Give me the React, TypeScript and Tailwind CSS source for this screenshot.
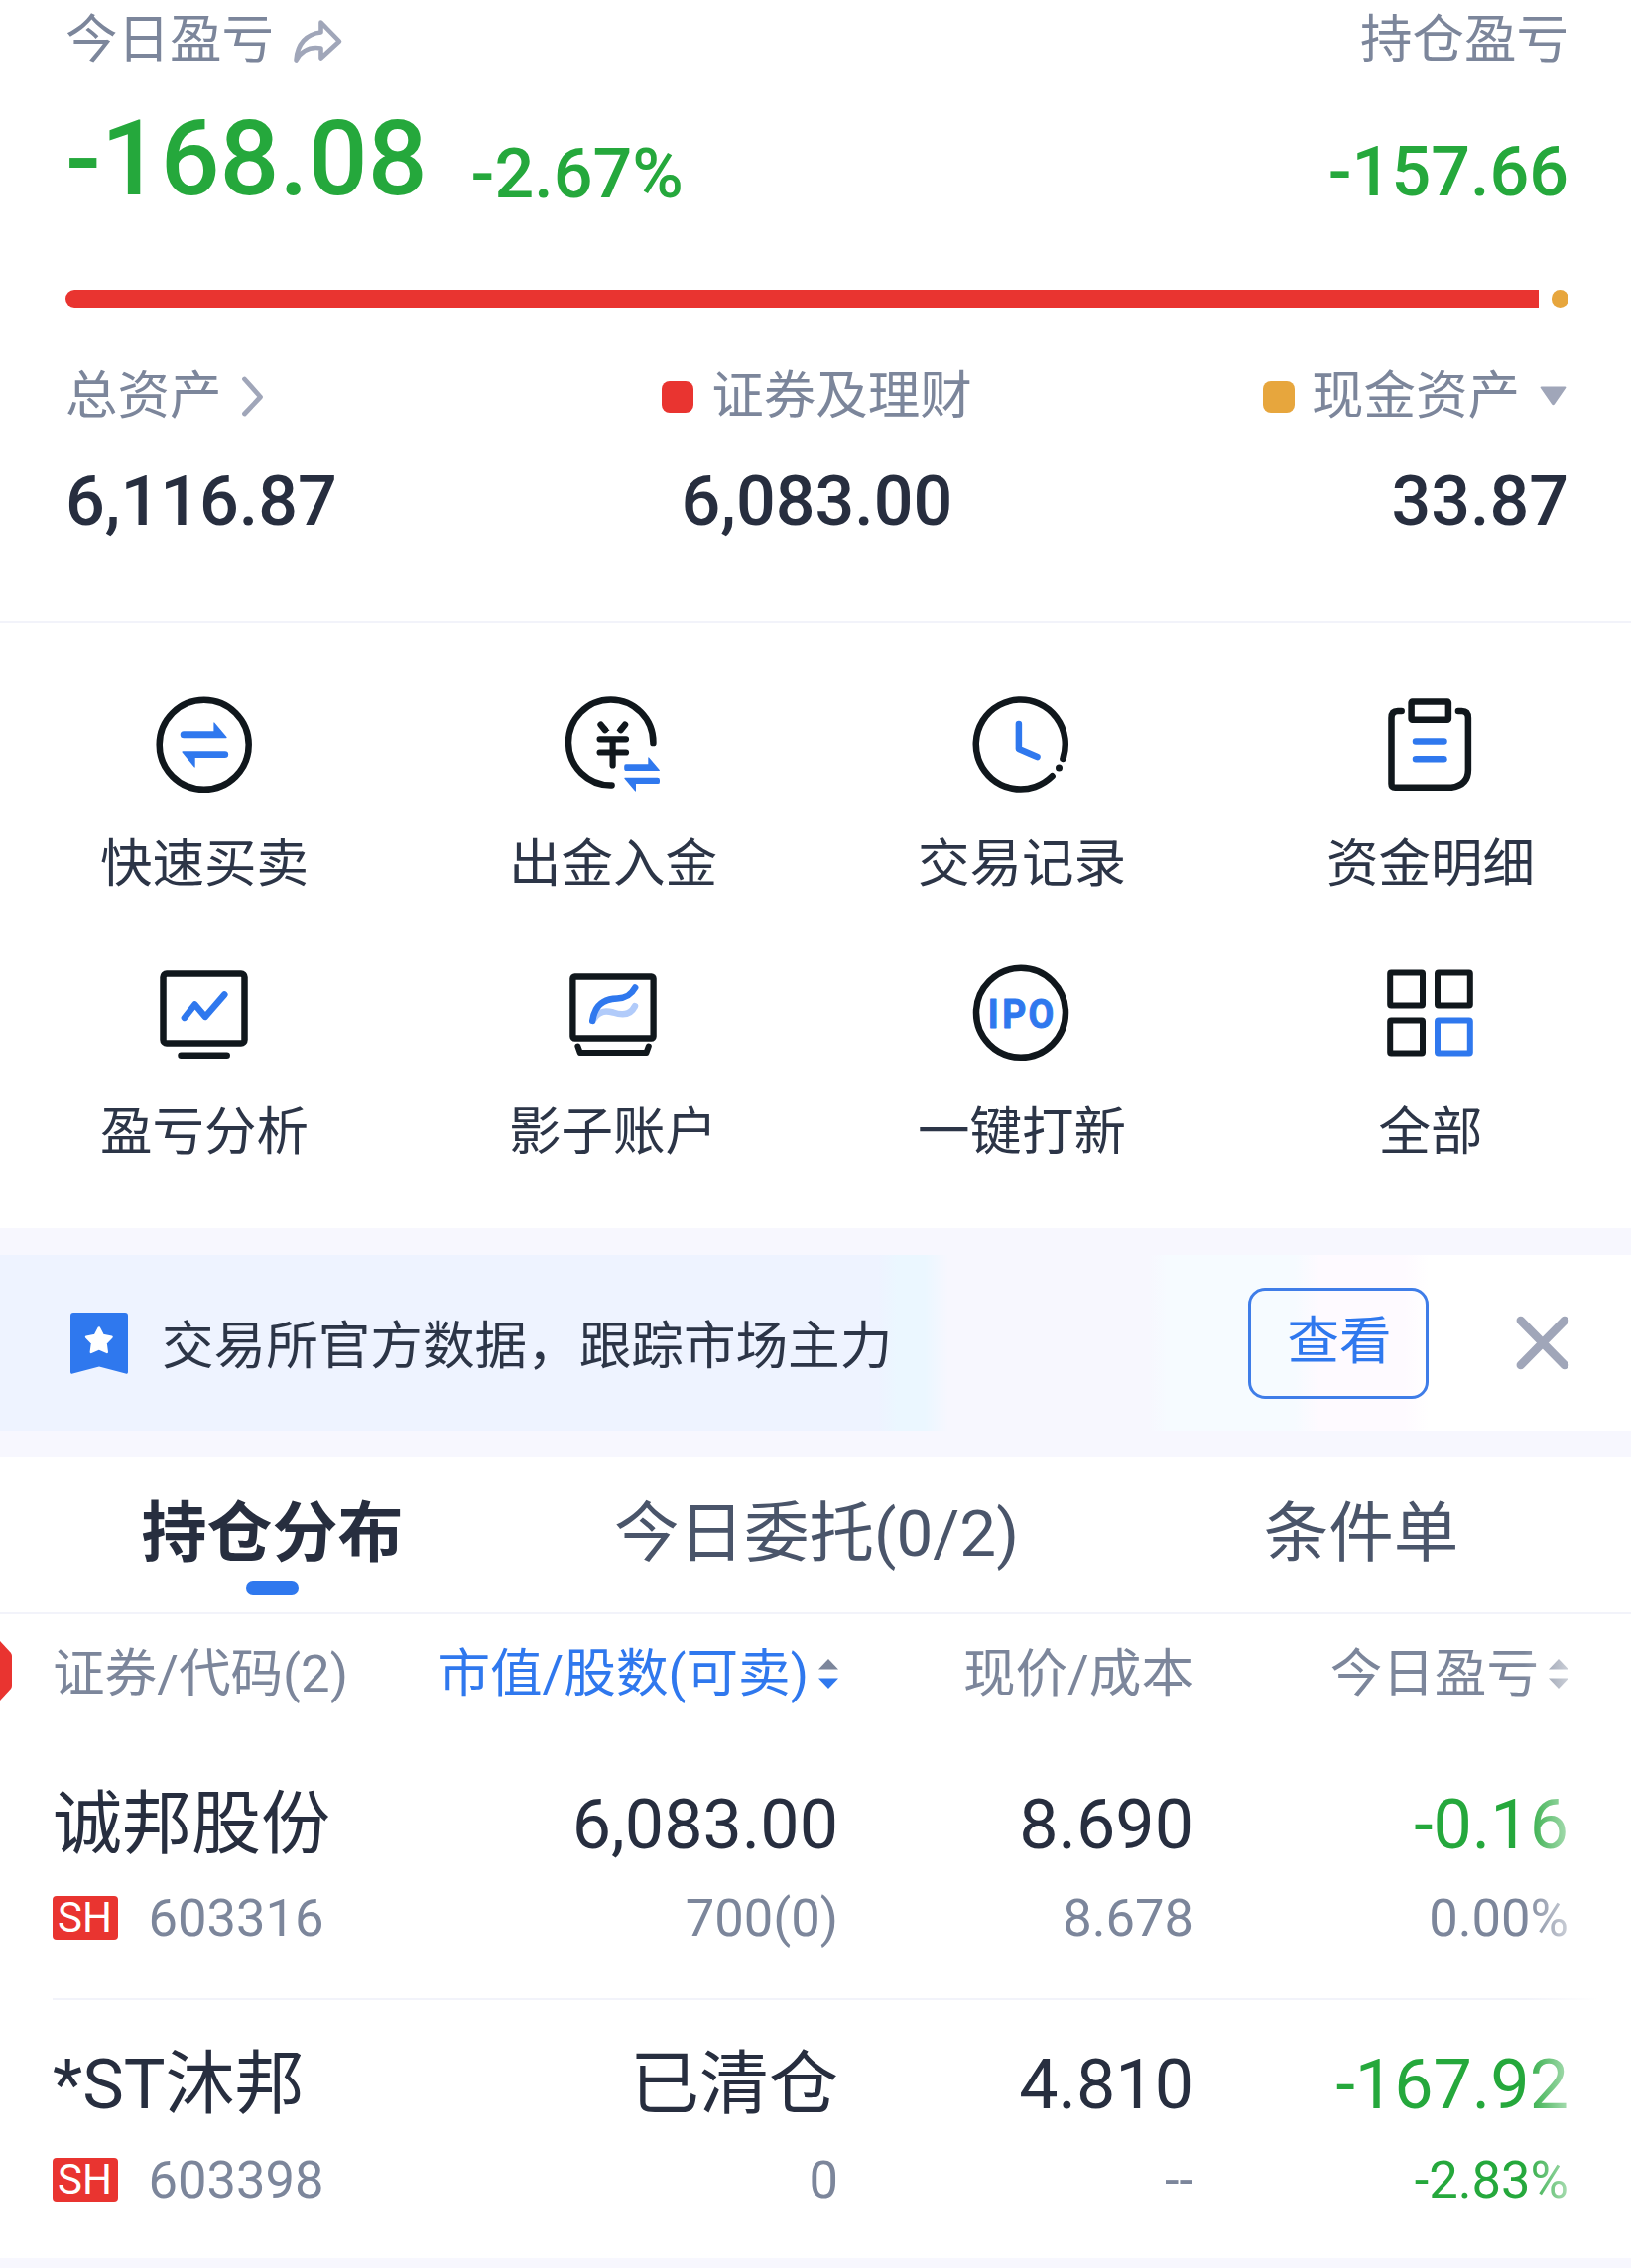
import type { ReactNode } from "react";

const INK = "#10171c";
const BLUE = "#2f78ee";

function Icon({ children, viewBox = "0 -0.5 112 112" }: { children: ReactNode; viewBox?: string }) {
  return (
    <svg
      className="block h-[112px] w-[112px]"
      viewBox={viewBox}
      fill="none"
      stroke={INK}
      strokeWidth="6.5"
      strokeLinecap="round"
      strokeLinejoin="round"
    >
      {children}
    </svg>
  );
}

function TradeIcon() {
  return (
    <Icon>
      <circle cx="55.7" cy="56.3" r="45" />
      <g fill={BLUE} stroke="none">
        <path d="M35.2 42.8H65.4V34.6q0-1.4 1-.4L78.4 48.6q.8 1.2-.6 1.2H35.2a3.5 3.5 0 0 1 0-7z" />
        <path d="M76.8 69.6H46.7V78.4q0 1.4-1 .4L33.6 64q-.8-1.2.6-1.2H76.8a3.4 3.4 0 0 1 0 6.8z" />
      </g>
    </Icon>
  );
}

function TransferIcon() {
  return (
    <Icon>
      <path d="M96.4 54.6A42.7 43 0 1 0 54.6 97" />
      <path d="M43.6 36.2L48 41.6M68 36.2L63.6 41.6" strokeWidth="6.5" />
      <path d="M47.4 42.6H52.6L49 38zM59.4 42.6H64.6L63 38z" fill={INK} stroke="none" />
      <path d="M42.6 50.8H69M42.6 64H69M55.6 51V77" strokeWidth="6.2" />
      <g fill={BLUE} stroke="none">
        <path d="M69 75.8H91.3V69.6q0-1.4 1-.3L102.7 81.4q.7 1.2-.5 1.2H69.6q-2.4 0-2.4-2.6V78q0-2.2 1.8-2.2z" />
        <path d="M101 95.6H79V102.4q0 1.4-1 .3L67.5 90.3q-.7-1.1.5-1.1H100.6q2.4 0 2.4 2.4V93.4q0 2.2-2 2.2z" />
      </g>
    </Icon>
  );
}

function HistoryIcon() {
  return (
    <Icon viewBox="0.7 -0.5 112 112">
      <path d="M98.1 70.4A45 45 0 1 0 87.3 87.8" />
      <circle cx="94.2" cy="79.6" r="3.5" fill={INK} stroke="none" />
      <path d="M53.6 35.6V60.6L72.2 68.6" stroke={BLUE} />
    </Icon>
  );
}

function ClipboardIcon() {
  return (
    <Icon viewBox="1.3 -0.5 112 112">
      <path d="M28 22.4H24.2q-6.4 0-6.4 7V95.4q0 3.8 3.8 3.8H78.4Q95.2 96.6 95.2 81.4V29.4q0-7-6.4-7H85.2" />
      <rect x="37.9" y="13" width="37.3" height="18.3" rx="1" />
      <path d="M42.3 53H70.8M42.3 70.7H70.8" stroke={BLUE} />
    </Icon>
  );
}

function AnalysisIcon() {
  return (
    <Icon viewBox="0.5 -0.5 112 112">
      <rect x="15" y="17" width="82" height="70" rx="3.5" />
      <path d="M33 99.3H79.2" />
      <path d="M36.4 61.4L47 48L57.4 60.4L76.8 38" stroke={BLUE} />
    </Icon>
  );
}

function ShadowIcon() {
  return (
    <Icon>
      <rect x="15.4" y="20" width="81.2" height="62" rx="2" strokeWidth="6.3" />
      <path d="M20.4 90L22.8 96.6H89.4L91.8 90" strokeWidth="6" />
      <path d="M37 62C43 54 49 54.4 56 56C66 59.4 74 58.4 78 49.6" stroke="#b1cbfa" />
      <path d="M35.2 64.4C37.4 50 45 42.4 60 42C69 41.6 74 38.6 78.2 31" stroke={BLUE} />
    </Icon>
  );
}

function IpoIcon() {
  return (
    <Icon viewBox="0.5 -0.5 112 112">
      <circle cx="55.5" cy="56.3" r="45" />
      <text
        x="24.6 40.8 70"
        y="71.2"
        transform="scale(0.9 1)"
        className="font-['Roboto',sans-serif] text-[41.5px] font-bold"
        fill={BLUE}
        stroke={BLUE}
        strokeWidth="1"
      >
        IPO
      </text>
    </Icon>
  );
}

function AllIcon() {
  return (
    <Icon viewBox="1 -0.5 112 112">
      <g strokeWidth="6">
        <rect x="16.2" y="16" width="32.8" height="33" rx="1" />
        <rect x="64" y="16" width="32.8" height="33" rx="1" />
        <rect x="16.2" y="64" width="32.8" height="33" rx="1" />
        <rect x="64" y="64" width="32.8" height="33" rx="1" stroke={BLUE} />
      </g>
    </Icon>
  );
}

const actions = [
  { label: "快速买卖", icon: <TradeIcon /> },
  { label: "出金入金", icon: <TransferIcon /> },
  { label: "交易记录", icon: <HistoryIcon /> },
  { label: "资金明细", icon: <ClipboardIcon /> },
  { label: "盈亏分析", icon: <AnalysisIcon /> },
  { label: "影子账户", icon: <ShadowIcon /> },
  { label: "一键打新", icon: <IpoIcon /> },
  { label: "全部", icon: <AllIcon /> },
];

function Summary() {
  return (
    <section className="h-[626px] pr-[63px] pl-[66px]">
      <div className="flex h-20 items-center justify-between text-[52.5px] text-[#7c869b]">
        <div className="flex items-center">
          <span>今日盈亏</span>
          <svg className="ml-[18px] block h-[50px] w-[56px]" viewBox="0 0 56 50" fill="none" stroke="#a0a6b9" strokeWidth="4.6" strokeLinejoin="round">
            <path d="M29.5 7.5L48 26.5L29.5 43.5V33.5C18 31.5 10 36 4.5 45.5C5.5 29 15 19 29.5 17.5Z" />
          </svg>
        </div>
        <span>持仓盈亏</span>
      </div>

      <div className="mt-[22px] flex h-[117px] items-start leading-[116px] font-medium text-[#25a83c]">
        <span className="text-[105.4px]">-168.08</span>
        <span className="mt-[15px] ml-[44px] text-[70px]">-2.67%</span>
        <span className="mt-[13px] ml-auto text-[70px]">-157.66</span>
      </div>

      <div className="mt-[73px] flex h-[18px] justify-between">
        <div className="w-[1485px] rounded-l-full bg-[#e93430]" />
        <div className="w-[17px] rounded-full bg-[#e7a63d]" />
      </div>

      <div className="mt-[59px] grid h-[60px] grid-cols-3 items-center text-[52.5px] leading-[60px] text-[#7c869b]">
        <div className="flex items-center">
          <span>总资产</span>
          <svg className="ml-[18px] block h-[44px] w-[28px]" viewBox="0 0 28 44" fill="none" stroke="#a0a6b9" strokeWidth="4.8" strokeLinecap="round" strokeLinejoin="round">
            <path d="M4.5 5L20.5 23L4.5 40" />
          </svg>
        </div>
        <div className="flex items-center justify-center">
          <span className="mt-px mr-[18px] size-8 rounded-lg bg-[#e93430]" />
          <span>证券及理财</span>
        </div>
        <div className="flex items-center justify-end">
          <span className="mt-px mr-[17px] size-8 rounded-lg bg-[#e7a63d]" />
          <span>现金资产</span>
          <svg className="mr-[2px] ml-[20px] block h-[20px] w-[27px]" viewBox="0 0 27 20" fill="#a0a6b9">
            <path d="M1.8 .6H25.2q2 0 .8 1.6L14.8 18.4q-1.3 1.6-2.6 0L1 2.2Q-.2 .6 1.8 .6z" />
          </svg>
        </div>
      </div>

      <div className="mt-[36px] grid h-20 grid-cols-3 items-center text-[70px] leading-[80px] font-medium text-[#272e3f]">
        <span>6,116.87</span>
        <span className="text-center">6,083.00</span>
        <span className="text-right">33.87</span>
      </div>
    </section>
  );
}

function Actions() {
  return (
    <section className="h-[612px] border-t-2 border-[#f2f3fa] pt-[66px]">
      <div className="grid w-[1648px] grid-cols-4 gap-y-[63px]">
        {actions.map((a) => (
          <div key={a.label} className="flex flex-col items-center">
            {a.icon}
            <span className="mt-[35px] h-[60px] text-[52.5px] leading-[60px] text-[#2c3547]">{a.label}</span>
          </div>
        ))}
      </div>
    </section>
  );
}

function Banner() {
  return (
    <section className="h-[231px] bg-[#f7f7fe] py-[27px]">
      <div className="flex h-[177px] items-center bg-[linear-gradient(90deg,#eef3ff_0px,#eef3ff_885px,#ebf7ff_905px,#ebf7ff_932px,#f7f7fe_956px,#f7f7fe_1158px,#f6fbff_1176px,#f6fbff_1305px,#fefaff_1330px,#fefaff_1415px,#ffffff_1440px)] pr-[60px] pl-[71px]">
        <svg className="block h-[62px] w-[58px]" viewBox="0 0 58 62">
          <path d="M3 0H55q3 0 3 3V60q0 2.4-2.4 1.4L29 54.6L2.4 61.4Q0 62.4 0 60V3Q0 0 3 0z" fill="#2f78ee" />
          <path d="M28.8 15.4L32.8 23L41.6 24.6L35.6 31L36.8 40L28.8 36.4L20.8 40L22 31L16 24.6L24.8 23Z" fill="#fff" stroke="#fff" strokeWidth="2.4" strokeLinejoin="round" />
        </svg>
        <span className="mt-[6px] ml-[34px] text-[52.6px] leading-[60px] text-[#2c3547]">交易所官方数据，跟踪市场主力</span>
        <button className="ml-auto flex h-[112px] w-[182px] items-center justify-center rounded-[17px] border-3 border-[#3f7de8] pb-[3px] pl-[2px] text-[52.5px] leading-[60px] text-[#2f78ee]">
          查看
        </button>
        <svg className="ml-[86px] block size-[58px]" viewBox="0 0 58 58" stroke="#a0a6b9" strokeWidth="8.5" strokeLinecap="round">
          <path d="M6.8 6L51 51M51 6L6.8 51" />
        </svg>
      </div>
    </section>
  );
}

function Tabs() {
  return (
    <nav className="grid h-[158px] grid-cols-[549px_548px_550px] border-b-2 border-[#f2f3fa] pt-[37px] text-[65.5px] leading-[80px] text-[#4a556a]">
      <div className="flex flex-col items-center">
        <span className="text-[66px] font-bold text-[#272e3f]">持仓分布</span>
        <span className="mt-[8px] h-[14px] w-[53px] rounded-full bg-[#2f78ee]" />
      </div>
      <span className="text-center">今日委托(0/2)</span>
      <span className="text-center">条件单</span>
    </nav>
  );
}

function Sort({ up, down }: { up: string; down: string }) {
  return (
    <svg className="block h-[30px] w-[20px]" viewBox="0 0 20 30">
      <path d="M10 0L20 10.5H0z" fill={up} />
      <path d="M10 30L20 19.5H0z" fill={down} />
    </svg>
  );
}

type Holding = {
  name: string;
  code: string;
  value: string;
  shares: string;
  price: string;
  cost: string;
  pnl: string;
  pct: string;
  pctTone: string;
  spacing: string;
};

const holdings: Holding[] = [
  {
    name: "诚邦股份",
    code: "603316",
    value: "6,083.00",
    shares: "700(0)",
    price: "8.690",
    cost: "8.678",
    pnl: "-0.16",
    pct: "0.00%",
    pctTone: "text-[#7c869b]",
    spacing: "h-[215px] gap-y-[24px]",
  },
  {
    name: "*ST沐邦",
    code: "603398",
    value: "已清仓",
    shares: "0",
    price: "4.810",
    cost: "--",
    pnl: "-167.92",
    pct: "-2.83%",
    pctTone: "text-[#25a83c]",
    spacing: "h-[260px] gap-y-[26px] pt-[45px]",
  },
];

function HoldingRow({ h }: { h: Holding }) {
  return (
    <div className={`grid grid-cols-[350px_442px_358px_378px] grid-rows-[80px_60px] items-center whitespace-nowrap ${h.spacing}`}>
      <span className="text-[70px] leading-[80px] text-[#272e3f]">{h.name}</span>
      <span className="text-right text-[70px] leading-[80px] text-[#272e3f]">{h.value}</span>
      <span className="text-right text-[70px] leading-[80px] text-[#272e3f]">{h.price}</span>
      <span className="text-right text-[70px] leading-[80px] text-[#25a83c]">{h.pnl}</span>
      <div className="flex items-center text-[52.5px] leading-[60px] text-[#7c869b]">
        <span className="flex h-[44px] w-[66px] items-center justify-center rounded-[4px] bg-[#e93430] pr-px text-[42px] leading-[44px] text-white">SH</span>
        <span className="ml-[30.5px]">{h.code}</span>
      </div>
      <span className="text-right text-[52.5px] leading-[60px] text-[#7c869b]">{h.shares}</span>
      <span className="text-right text-[52.5px] leading-[60px] text-[#7c869b]">{h.cost}</span>
      <span className={`text-right text-[52.5px] leading-[60px] ${h.pctTone}`}>{h.pct}</span>
    </div>
  );
}

function Holdings() {
  return (
    <section className="relative h-[649px] pl-[53px]">
      <svg className="absolute top-[27px] left-0 h-[60px] w-[12px]" viewBox="0 0 12 60" fill="#e93430">
        <path d="M0 0L10.6 11.4Q12 13 12 15V45Q12 47 10.6 48.6L0 60z" />
      </svg>
      <div className="grid h-[172px] grid-cols-[350px_442px_358px_378px] pt-[30px] text-[52.6px] leading-[60px] whitespace-nowrap text-[#7c869b]">
        <span>证券/代码(2)</span>
        <div className="flex h-[60px] items-center justify-end gap-[10px] text-[#2f78ee]">
          <span>市值/股数(可卖)</span>
          <Sort up="#7c869b" down="#2f78ee" />
        </div>
        <span className="text-right">现价/成本</span>
        <div className="flex h-[60px] items-center justify-end gap-[10px]">
          <span>今日盈亏</span>
          <Sort up="#7c869b" down="#7c869b" />
        </div>
      </div>
      <HoldingRow h={holdings[0]} />
      <div className="h-[2px] bg-[#f2f3fa]" />
      <HoldingRow h={holdings[1]} />
      <div className="absolute inset-y-0 right-0 w-[120px] bg-[linear-gradient(90deg,#ffffff00_12px,#ffffff_86px)]" />
    </section>
  );
}

export default function App() {
  return (
    <main className="h-[2286px] w-[1644px] overflow-hidden bg-white font-['Roboto','Noto_Sans_CJK_SC',sans-serif]" lang="zh-CN">
      <Summary />
      <Actions />
      <Banner />
      <Tabs />
      <Holdings />
      <div className="h-[10px] bg-[#f7f7fe]" />
    </main>
  );
}
